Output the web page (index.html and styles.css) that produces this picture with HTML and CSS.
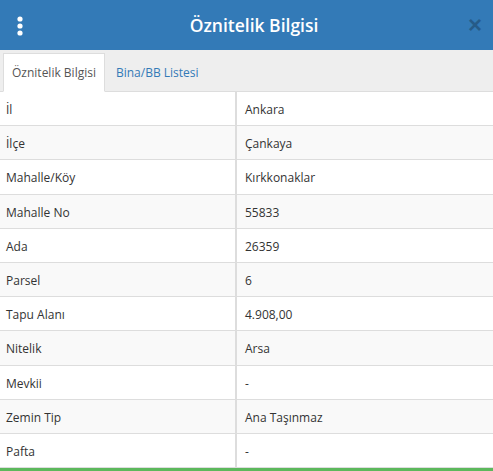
FILE: index.html
```html
<!DOCTYPE html>
<html lang="tr">
<head>
    <meta charset="UTF-8">
    <title>Öznitelik Bilgisi</title>
    <link rel="stylesheet" href="styles.css">
</head>
<body>

<div class="panel">
    <!-- Başlık -->
    <div class="panel-header">
        <span class="menu-btn">
            <svg width="8" height="20" viewBox="0 0 8 20">
                <circle cx="4" cy="3" r="2.6" fill="#fff"/>
                <circle cx="4" cy="10" r="2.6" fill="#fff"/>
                <circle cx="4" cy="17" r="2.6" fill="#fff"/>
            </svg>
        </span>
        <h2>Öznitelik Bilgisi</h2>
        <span class="close">&times;</span>
    </div>

    <!-- Sekmeler -->
    <ul class="nav-tabs">
        <li class="active"><a href="#">Öznitelik Bilgisi</a></li>
        <li><a href="#">Bina/BB Listesi</a></li>
    </ul>

    <!-- Tablo -->
    <table class="attr-table">
        <tr><td>İl</td><td>Ankara</td></tr>
        <tr><td>İlçe</td><td>Çankaya</td></tr>
        <tr><td>Mahalle/Köy</td><td>Kırkkonaklar</td></tr>
        <tr><td>Mahalle No</td><td>55833</td></tr>
        <tr><td>Ada</td><td>26359</td></tr>
        <tr><td>Parsel</td><td>6</td></tr>
        <tr><td>Tapu Alanı</td><td>4.908,00</td></tr>
        <tr><td>Nitelik</td><td>Arsa</td></tr>
        <tr><td>Mevkii</td><td>-</td></tr>
        <tr><td>Zemin Tip</td><td>Ana Taşınmaz</td></tr>
        <tr><td>Pafta</td><td>-</td></tr>
    </table>
    <div class="panel-footer"></div>
</div>

</body>
</html>
```

FILE: styles.css
```css
body {
    font-family: "Open Sans", Arial, sans-serif;
    margin: 0;
    padding: 0;
    background-color: #fff;
    color: #333;
}

.panel {
    width: 493px;
}

.panel-header {
    height: 50px;
    background-color: #337ab7;
    display: flex;
    align-items: center;
    justify-content: space-between;
    padding: 0 3px 0 16px;
}

.menu-btn {
    display: flex;
    width: 30px;
    padding-top: 1px;
}

.panel-header h2 {
    margin: 0;
    color: #fff;
    font-size: 17.5px;
    font-weight: 600;
    flex: 1;
    text-align: center;
    padding-left: 2px;
}

.close {
    width: 30px;
    text-align: center;
    font-size: 24px;
    font-weight: bold;
    color: #000;
    opacity: 0.25;
    line-height: 1;
    font-family: Arial, sans-serif;
}

.nav-tabs {
    list-style: none;
    margin: 0;
    padding: 3px 0 0 3px;
    background-color: #eee;
    border-bottom: 1px solid #ddd;
    display: flex;
}

.nav-tabs li {
    margin-bottom: -1px;
}

.nav-tabs a {
    display: block;
    padding: 10px 15px 10px 10px;
    font-size: 12px;
    line-height: 17px;
    color: #337ab7;
    text-decoration: none;
    border: 1px solid transparent;
}

.nav-tabs .active a {
    color: #555;
    background-color: #fff;
    border-color: #ddd;
    border-bottom-color: #fff;
    padding: 10px 8px;
}

.attr-table {
    width: 100%;
    border-collapse: collapse;
    font-size: 12px;
}

.attr-table td {
    padding: 9px 6px 7px;
    line-height: 17.2px;
    border-bottom: 1px solid #ddd;
}

.attr-table td:first-child {
    width: 223px;
    border-right: 2px solid #ddd;
}

.attr-table td:last-child {
    padding-left: 8px;
}

.attr-table tr:nth-child(even) {
    background-color: #f9f9f9;
}

.panel-footer {
    height: 3px;
    background-color: #5cb85c;
}
```
